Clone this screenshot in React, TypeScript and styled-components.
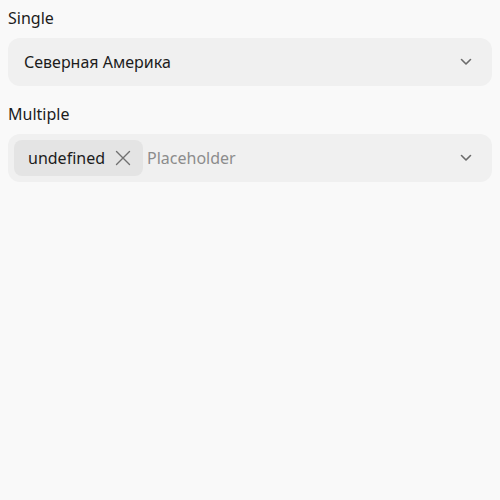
import React from "react";
import styled, { createGlobalStyle } from "styled-components";

const Global = createGlobalStyle`
  html, body { background: #f9f9f9; }
  body { margin: 8px; font-family: "Noto Sans", "Open Sans", sans-serif; color: #1c1c1c; }
`;

const Page = styled.div`
  display: flex;
  flex-direction: column;
  gap: 18px;
`;

const Group = styled.div`
  display: flex;
  flex-direction: column;
  gap: 10px;
`;

const Label = styled.div`
  font-size: 16px;
  line-height: 20px;
  color: #1c1c1c;
`;

const Field = styled.div<{ $multi?: boolean }>`
  height: 48px;
  box-sizing: border-box;
  background: #f0f0f0;
  border-radius: 12px;
  display: flex;
  align-items: center;
  gap: 4px;
  padding: ${(p) => (p.$multi ? "0 20px 0 6px" : "0 20px 0 16px")};
`;

const Value = styled.span`
  flex: 1;
  font-size: 16px;
  color: #1c1c1c;
`;

const Placeholder = styled.span`
  flex: 1;
  font-size: 16px;
  color: #8c8c8c;
`;

const Chip = styled.span`
  display: inline-flex;
  align-items: center;
  gap: 10px;
  height: 36px;
  box-sizing: border-box;
  padding: 0 12px 0 14px;
  border-radius: 8px;
  background: #e4e4e4;
  font-size: 16px;
  color: #1c1c1c;
`;

const Chevron = () => (
  <svg width="12" height="8" viewBox="0 0 12 8" fill="none">
    <path d="M1.5 1.5 L6 6 L10.5 1.5" stroke="#6b6b6b" strokeWidth="1.6" strokeLinecap="round" strokeLinejoin="round" />
  </svg>
);

const Cross = () => (
  <svg width="16" height="16" viewBox="0 0 16 16" fill="none">
    <path d="M1.5 1.5 L14.5 14.5 M14.5 1.5 L1.5 14.5" stroke="#707070" strokeWidth="1.4" strokeLinecap="round" />
  </svg>
);

export default function App() {
  return (
    <>
      <Global />
      <Page>
        <Group>
          <Label>Single</Label>
          <Field>
            <Value>Северная Америка</Value>
            <Chevron />
          </Field>
        </Group>
        <Group>
          <Label>Multiple</Label>
          <Field $multi>
            <Chip>
              undefined
              <Cross />
            </Chip>
            <Placeholder>Placeholder</Placeholder>
            <Chevron />
          </Field>
        </Group>
      </Page>
    </>
  );
}
